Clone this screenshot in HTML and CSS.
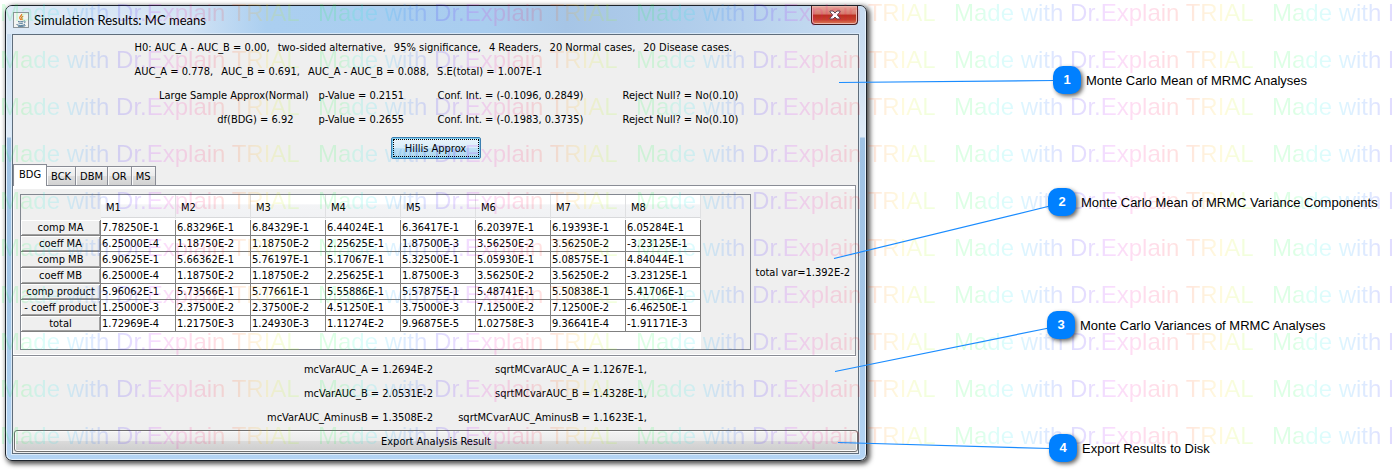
FILE: index.html
```html
<!DOCTYPE html>
<html lang="en">
<head>
<meta charset="utf-8">
<title>Simulation Results: MC means</title>
<link rel="stylesheet" href="styles.css">
</head>
<body>
<main class="stage">
  <section class="window" aria-label="Simulation Results">
    <header class="titlebar">
      <svg class="java" viewBox="0 0 16 16" aria-hidden="true">
        <rect x="0.5" y="0.5" width="15" height="15" fill="#f4f4f2" stroke="#8c9499"/>
        <path d="M8.600 2c.8 1.600-2.600 2.500-1.800 4.200.3.700.9 1.200 1.100 1.800M10.200 4.300c-2 .8-1.900 1.600-1.200 2.400.4.500.2 1-.3 1.400" fill="none" stroke="#e8761e" stroke-width="1.200"/>
        <path d="M5 9.300c1.500.6 4 .6 5.500 0M5.500 11c1.300.5 3.400.5 4.600 0M10.800 9c1.900-.3 1.700 1.600.2 2M3.500 12.500c2 1.300 6.500 1.300 8.500 0M5 14.200c2.500.4 5.500.3 7.500-.6" fill="none" stroke="#4e7896" stroke-width="1"/>
      </svg>
      <h1 class="title">Simulation Results: MC means</h1>
      <button class="close" type="button" aria-label="Close">
        <svg viewBox="0 0 12 10" aria-hidden="true"><path d="M1 1h3l2 2 2-2h3v1L8.300 5 11 8v1H8L6 7 4 9H1V8l2.700-3L1 2z" fill="#fff" stroke="#5b4a55"/></svg>
      </button>
    </header>
    <div class="content">
      <div class="summary">
        <p class="line"><span>H0: AUC_A - AUC_B = 0.00,</span><span>two-sided alternative,</span><span>95% significance,</span><span>4 Readers,</span><span>20 Normal cases,</span><span>20 Disease cases.</span></p>
        <p class="line"><span>AUC_A = 0.778,</span><span>AUC_B = 0.691,</span><span>AUC_A - AUC_B = 0.088,</span><span>S.E(total) = 1.007E-1</span></p>
        <p class="stats"><span class="lead">Large Sample Approx(Normal)</span><span>p-Value = 0.2151</span><span>Conf. Int. = (-0.1096, 0.2849)</span><span>Reject Null? = No(0.10)</span></p>
        <p class="stats"><span class="lead indent">df(BDG) = 6.92</span><span>p-Value = 0.2655</span><span>Conf. Int. = (-0.1983, 0.3735)</span><span>Reject Null? = No(0.10)</span></p>
      </div>
      <button class="hillis" type="button">Hillis Approx</button>
      <div class="tabs" role="tablist">
        <button class="tab active" type="button" role="tab" aria-selected="true">BDG</button>
        <button class="tab" type="button" role="tab">BCK</button>
        <button class="tab" type="button" role="tab">DBM</button>
        <button class="tab" type="button" role="tab">OR</button>
        <button class="tab" type="button" role="tab">MS</button>
      </div>
      <div class="pane">
        <div class="scroll">
          <table class="grid">
            <thead><tr><td class="corner"></td><th>M1</th><th>M2</th><th>M3</th><th>M4</th><th>M5</th><th>M6</th><th>M7</th><th>M8</th></tr></thead>
            <tbody>
              <tr><th>comp MA</th><td>7.78250E-1</td><td>6.83296E-1</td><td>6.84329E-1</td><td>6.44024E-1</td><td>6.36417E-1</td><td>6.20397E-1</td><td>6.19393E-1</td><td>6.05284E-1</td></tr>
              <tr><th>coeff MA</th><td>6.25000E-4</td><td>1.18750E-2</td><td>1.18750E-2</td><td>2.25625E-1</td><td>1.87500E-3</td><td>3.56250E-2</td><td>3.56250E-2</td><td>-3.23125E-1</td></tr>
              <tr><th>comp MB</th><td>6.90625E-1</td><td>5.66362E-1</td><td>5.76197E-1</td><td>5.17067E-1</td><td>5.32500E-1</td><td>5.05930E-1</td><td>5.08575E-1</td><td>4.84044E-1</td></tr>
              <tr><th>coeff MB</th><td>6.25000E-4</td><td>1.18750E-2</td><td>1.18750E-2</td><td>2.25625E-1</td><td>1.87500E-3</td><td>3.56250E-2</td><td>3.56250E-2</td><td>-3.23125E-1</td></tr>
              <tr><th>comp product</th><td>5.96062E-1</td><td>5.73566E-1</td><td>5.77661E-1</td><td>5.55886E-1</td><td>5.57875E-1</td><td>5.48741E-1</td><td>5.50838E-1</td><td>5.41706E-1</td></tr>
              <tr><th>- coeff product</th><td>1.25000E-3</td><td>2.37500E-2</td><td>2.37500E-2</td><td>4.51250E-1</td><td>3.75000E-3</td><td>7.12500E-2</td><td>7.12500E-2</td><td>-6.46250E-1</td></tr>
              <tr><th>total</th><td>1.72969E-4</td><td>1.21750E-3</td><td>1.24930E-3</td><td>1.11274E-2</td><td>9.96875E-5</td><td>1.02758E-3</td><td>9.36641E-4</td><td>-1.91171E-3</td></tr>
            </tbody>
          </table>
          <div class="filler"></div>
        </div>
        <p class="total">total var=1.392E-2</p>
      </div>
      <div class="variances">
        <span>mcVarAUC_A = 1.2694E-2</span><span>sqrtMCvarAUC_A = 1.1267E-1,</span>
        <span>mcVarAUC_B = 2.0531E-2</span><span>sqrtMCvarAUC_B = 1.4328E-1,</span>
        <span>mcVarAUC_AminusB = 1.3508E-2</span><span>sqrtMCvarAUC_AminusB = 1.1623E-1,</span>
      </div>
      <button class="export" type="button">Export Analysis Result</button>
    </div>
  </section>

  <div class="watermark" aria-hidden="true">
    <p><span>Made with Dr.Explain TRIAL</span><span>Made with Dr.Explain TRIAL</span><span>Made with Dr.Explain TRIAL</span><span>Made with Dr.Explain TRIAL</span><span>Made with Dr.Explain TRIAL</span></p>
    <p><span>Made with Dr.Explain TRIAL</span><span>Made with Dr.Explain TRIAL</span><span>Made with Dr.Explain TRIAL</span><span>Made with Dr.Explain TRIAL</span><span>Made with Dr.Explain TRIAL</span></p>
    <p><span>Made with Dr.Explain TRIAL</span><span>Made with Dr.Explain TRIAL</span><span>Made with Dr.Explain TRIAL</span><span>Made with Dr.Explain TRIAL</span><span>Made with Dr.Explain TRIAL</span></p>
    <p><span>Made with Dr.Explain TRIAL</span><span>Made with Dr.Explain TRIAL</span><span>Made with Dr.Explain TRIAL</span><span>Made with Dr.Explain TRIAL</span><span>Made with Dr.Explain TRIAL</span></p>
    <p><span>Made with Dr.Explain TRIAL</span><span>Made with Dr.Explain TRIAL</span><span>Made with Dr.Explain TRIAL</span><span>Made with Dr.Explain TRIAL</span><span>Made with Dr.Explain TRIAL</span></p>
    <p><span>Made with Dr.Explain TRIAL</span><span>Made with Dr.Explain TRIAL</span><span>Made with Dr.Explain TRIAL</span><span>Made with Dr.Explain TRIAL</span><span>Made with Dr.Explain TRIAL</span></p>
    <p><span>Made with Dr.Explain TRIAL</span><span>Made with Dr.Explain TRIAL</span><span>Made with Dr.Explain TRIAL</span><span>Made with Dr.Explain TRIAL</span><span>Made with Dr.Explain TRIAL</span></p>
    <p><span>Made with Dr.Explain TRIAL</span><span>Made with Dr.Explain TRIAL</span><span>Made with Dr.Explain TRIAL</span><span>Made with Dr.Explain TRIAL</span><span>Made with Dr.Explain TRIAL</span></p>
    <p><span>Made with Dr.Explain TRIAL</span><span>Made with Dr.Explain TRIAL</span><span>Made with Dr.Explain TRIAL</span><span>Made with Dr.Explain TRIAL</span><span>Made with Dr.Explain TRIAL</span></p>
    <p><span>Made with Dr.Explain TRIAL</span><span>Made with Dr.Explain TRIAL</span><span>Made with Dr.Explain TRIAL</span><span>Made with Dr.Explain TRIAL</span><span>Made with Dr.Explain TRIAL</span></p>
  </div>

  <svg class="leaders" width="1392" height="473" aria-hidden="true">
    <path d="M839 82.500L1054 80.500M834 258.500L1050 206M835 371.500L1049 328M838 442.500L1050 448.500" fill="none" stroke="#1a8cff" stroke-width="1.200"/>
  </svg>
  <p class="callout c1"><b>1</b>Monte Carlo Mean of MRMC Analyses</p>
  <p class="callout c2"><b>2</b>Monte Carlo Mean of MRMC Variance Components</p>
  <p class="callout c3"><b>3</b>Monte Carlo Variances of MRMC Analyses</p>
  <p class="callout c4"><b>4</b>Export Results to Disk</p>
</main>
</body>
</html>
```

FILE: styles.css
```css
* { box-sizing: border-box; }

body {
  margin: 0;
  background: #fff;
  color: #000;
  font-family: "DejaVu Sans Condensed", "DejaVu Sans", sans-serif;
  font-size: 11px;
}

p, h1 { margin: 0; }

button {
  margin: 0;
  padding: 0;
  color: #000;
  font: inherit;
}

.stage {
  position: relative;
  min-height: 100vh;
  padding: 5px;
  overflow: hidden;
}

/* window frame */
.window {
  width: 100%;
  max-width: 862px;
  padding: 0 7px 6px 6px;
  border: 1px solid #1d232b;
  border-radius: 7px;
  background: linear-gradient(#c3d8ef, #cfe0f2 70px, #e0ebf7 131px, #9fc2e4 132px, #a4c6e7 300px, #b4d4f4);
  box-shadow: inset 0 0 0 1px #e6f2fd, 2px 2px 5px 1px rgba(0, 0, 0, .7);
}

.titlebar {
  display: flex;
  align-items: center;
  height: 28px;
  margin: 0 -6px;
  padding: 0 7px;
  border-radius: 6px 6px 0 0;
  background: linear-gradient(90deg, #dde9f6, #d3e3f4 180px, #abcff0 260px, #a9cdef 480px, #a6c5e6 560px, #b0cdeb 680px, #c8dcf1);
}

.java { width: 16px; height: 16px; margin-right: 5px; }

.title {
  flex: 1;
  font: 400 12px Lato, "Open Sans", sans-serif;
  font-size: 13px;
  text-shadow: 0 0 6px #fff;
}

.close {
  display: flex;
  align-items: center;
  justify-content: center;
  align-self: flex-start;
  width: 47px;
  height: 19px;
  border: 1px solid #4b1d20;
  border-top: 0;
  border-radius: 0 0 4px 4px;
  background: linear-gradient(#e5a79d, #d5786b 45%, #b92f20 50%, #c4402c 75%, #dd7a5c);
  box-shadow: inset 0 0 0 1px #eab3aa;
}

.close svg { width: 12px; height: 10px; }

.content {
  display: flex;
  flex-direction: column;
  border: 1px solid #5f6d7b;
  background: #efefef;
  box-shadow: 0 0 0 1px #d9e9f8;
}

/* test summary */
.summary {
  width: 602px;
  max-width: 100%;
  margin: 0 auto;
  padding-top: 1px;
  line-height: 24px;
  white-space: nowrap;
}

.line { display: flex; gap: 8px; }

.stats {
  display: grid;
  grid-template-columns: 174px 129px 185px 114px;
}

.lead { justify-self: end; }
.stats .lead + span { padding-left: 10px; }
.indent { padding-right: 15px; }

.hillis {
  align-self: center;
  width: 90px;
  height: 22px;
  margin: 5px 0;
  border: 1px solid #3c7fb1;
  border-radius: 2px;
  outline: 1px dotted #000;
  outline-offset: -3px;
  background: linear-gradient(#eaf4fb, #d9edf9 48%, #bfe1f5 50%, #add6ee);
  box-shadow: inset 0 0 0 1px #7fd0f3;
}

/* tab strip */
.tabs { display: flex; align-items: flex-end; }

.tab {
  height: 19px;
  padding: 0 4px;
  border: 1px solid #898c95;
  border-bottom: 0;
  border-left-width: 0;
  background: linear-gradient(#f4f4f4, #ececec 50%, #dedede 51%, #d2d2d2);
  box-shadow: inset 1px 1px 0 #fbfbfb;
}

.tab.active {
  height: 22px;
  padding: 0 5px 2px;
  margin-bottom: -1px;
  border-left-width: 1px;
  background: #fff;
  z-index: 1;
}

.pane {
  display: flex;
  align-items: center;
  margin-right: 2px;
  padding: 8px 5px 5px 7px;
  border: 1px solid #898c95;
  border-left: 0;
  box-shadow: inset 0 3px 0 #fff, inset 0 -1px 0 #fff, inset 1px 0 0 #fff, 0 1px 0 #fff;
}

.scroll {
  width: 733px;
  border: 1px solid #828790;
}

.grid {
  border-spacing: 0;
  table-layout: fixed;
  width: 680px;
}

.grid td, .grid th {
  width: 75px;
  height: 16px;
  padding: 0 1px;
  border-right: 1px solid #808080;
  border-bottom: 1px solid #808080;
  background: #fff;
  font-weight: 400;
  line-height: 15px;
  white-space: nowrap;
}

.grid thead th {
  height: 25px;
  padding: 2px 5px 0;
  border-right: 1px solid #dfe0e2;
  border-bottom: 2px solid #fff;
  background: linear-gradient(#fff 40%, #f3f4f6 42%, #f1f2f4 94%, #d8d9db 95%);
  text-align: left;
}

.grid .corner {
  width: 80px;
  border: 0;
  background: #efefef;
}

.grid tbody th {
  width: 80px;
  padding: 0;
  background: #efefef;
  box-shadow: inset 1px 1px 0 #fff, inset -1px -1px 0 #a0a0a0;
  text-align: center;
}

.filler { width: 680px; height: 17px; background: #fff; }

.total { flex: 1; padding-left: 5px; white-space: nowrap; }

.variances {
  display: grid;
  grid-template-columns: 420px 214px;
  padding-top: 2px;
  line-height: 24px;
  text-align: right;
}

.export {
  height: 22px;
  margin: 0 0 1px 1px;
  border: 1px solid #707070;
  border-radius: 3px;
  background: linear-gradient(#f3f3f3, #ebebeb 48%, #dadada 52%, #cdcdcd);
  box-shadow: inset 0 0 0 1px #fafafa;
}

/* repeated trial text over the whole page */
.watermark {
  position: absolute;
  inset: 0;
  overflow: hidden;
  opacity: .13;
  pointer-events: none;
  font: 24px/47px "Liberation Sans", Arial, sans-serif;
}

.watermark p {
  display: grid;
  grid-template-columns: repeat(5, 318px);
  white-space: nowrap;
}

.watermark p:first-child { margin-top: -11px; }

.watermark span {
  justify-self: start;
  background: linear-gradient(90deg, #00ff40 8%, #00ffc0 12%, #00e0ff 20%, #0080ff 28%, #2000ff 40%, #6000ff 47%, #d000ff 52%, #ff00a0 60%, #ff0040 70%, #ff4000 78%, #ff9000 83%, #ffe000 89%, #a0ff00 97%);
  background-clip: text;
  -webkit-background-clip: text;
  color: transparent;
}

/* numbered callouts */
.leaders { position: absolute; top: 0; left: 0; }

.callout {
  position: absolute;
  display: flex;
  align-items: center;
  gap: 5px;
  font: 13px "Liberation Sans", Arial, sans-serif;
  white-space: nowrap;
}

.callout b {
  width: 28px;
  height: 28px;
  border-radius: 10px;
  background: #0080ff;
  box-shadow: 2px 2px 4px rgba(0, 0, 0, .6);
  color: #fff;
  line-height: 28px;
  text-align: center;
}

.c1 { left: 1053px; top: 66px; }
.c2 { left: 1048px; top: 188px; }
.c3 { left: 1047px; top: 311px; }
.c4 { left: 1049px; top: 434px; }
```
